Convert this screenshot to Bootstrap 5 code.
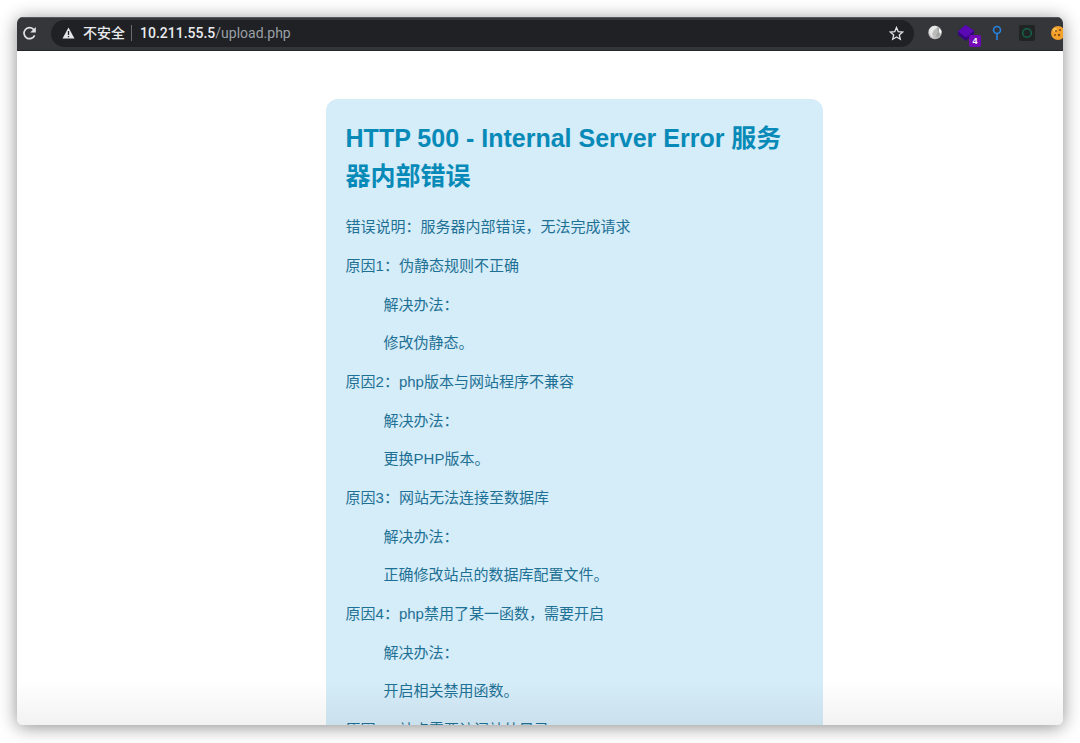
<!DOCTYPE html>
<html lang="zh-CN">
<head>
<meta charset="utf-8">
<meta name="viewport" content="width=device-width, initial-scale=1">
<title>HTTP 500</title>
<link href="https://cdn.jsdelivr.net/npm/bootstrap@5.3.0/dist/css/bootstrap.min.css" rel="stylesheet">
<script src="https://cdn.jsdelivr.net/npm/bootstrap@5.3.0/dist/js/bootstrap.bundle.min.js" defer></script>
<style>
body{background:#fff;font-family:"Liberation Sans","Noto Sans CJK SC",sans-serif;padding:17px 17px 18px}
.browser{border-radius:6px;box-shadow:0 2px 18px rgba(0,0,0,.45)}
.toolbar{height:34px;background:#35363a;border-top:1px solid #55565a;border-bottom:1px solid #242528;padding:0 0 2px 5px}
.toolbar button{background:none;border:0;padding:0;line-height:0;color:#dfe1e5}
.omnibox{background:#202124;height:27px;border-radius:14px;padding:0 10px 0 11px;margin:0 13px 0 14px;color:#e8eaed;font:14px/20px Roboto,"Noto Sans CJK SC",sans-serif}
.unsafe{font-size:14px;font-weight:500;margin-left:8px}
.divider{width:1px;height:16px;background:#6a6c70;margin:0 8px 0 6px}
.address{color:#9aa0a6;font-size:14px}
.address b{color:#e8eaed;font-weight:500}
.extensions{gap:14px;margin-right:-4px}
.count{position:absolute;right:-6px;bottom:-6px;width:12px;height:12px;border-radius:2px;background:#7209b7;color:#fff;font:bold 9px/12px "Liberation Sans",sans-serif;text-align:center}
.page{background:#fff}
.page::after{content:"";position:absolute;inset:auto 0 0;height:45px;background:linear-gradient(transparent,rgba(0,0,0,.05));pointer-events:none}
.notice{width:497px;max-width:100%;margin:48px 0 0 29.5%;padding:20px;border-radius:12px;background:#d5ecf9;color:#1e7194;font-size:15px;line-height:23px}
.notice h1{font-size:25px;line-height:38px;font-weight:700;color:#078ab7;margin:0 0 20px}
.notice p{margin:0 0 16px}
.notice blockquote{margin:0 0 16px 38px;font-size:15px}
.notice blockquote p{margin:0 0 15px}
.notice blockquote p:last-child{margin:0}
</style>
</head>
<body class="vh-100 overflow-hidden">
<div class="browser h-100 d-flex flex-column overflow-hidden">
  <header class="toolbar d-flex align-items-center flex-shrink-0">
    <button type="button" aria-label="重新加载"><svg width="15" height="15" viewBox="0 0 15 15"><path d="M12.6 9.3A5.5 5.5 0 1 1 11.5 3.4L13 5" fill="none" stroke="currentColor" stroke-width="1.7"/><path d="M13.8 1v5.6H8.2z" fill="currentColor"/></svg></button>
    <div class="omnibox d-flex align-items-center flex-grow-1">
      <svg width="13" height="12" viewBox="0 0 13 12"><path d="M6.5.5 12.5 11.5H.5z" fill="#e4e6e9"/><path d="M6.5 4v4M6.5 9v1.3" stroke="#202124" stroke-width="1.3"/></svg>
      <span class="unsafe">不安全</span><span class="divider"></span>
      <span class="address flex-grow-1"><b>10.211.55.5</b>/upload.php</span>
      <button type="button" aria-label="收藏"><svg width="15" height="15" viewBox="0 0 15 15"><path d="M7.5 1.5 9.2 5.6 13.700 6 10.3 8.9 11.3 13.2 7.5 10.9 3.7 13.2 4.7 8.9 1.3 6 5.8 5.6z" fill="none" stroke="currentColor" stroke-width="1.3"/></svg></button>
    </div>
    <div class="extensions d-flex align-items-center">
      <button type="button" aria-label="扩展程序"><svg width="16" height="16" viewBox="0 0 16 16"><circle cx="8" cy="7.5" r="6.8" fill="#bcbcbc"/><path d="M2 5Q4 .8 8 .7L11 2 7 5 5 9 7 13Q2 11 2 5" fill="#e8e8e8"/><path d="M10 2l3 2-1 3 1 3-3 3-1-3 2-3z" fill="#a5a5a5"/><path d="M12 3l2.5 3-.5 3-2-2z" fill="#f7f7f7"/></svg></button>
      <button type="button" class="position-relative" aria-label="扩展程序 4"><svg width="18" height="16" viewBox="0 0 18 16"><path d="M1 6.5 8.5 0 17 5.5V9L9 16 1 10z" fill="#35067c"/><path d="M1 6.5 8.5 0 17 5.5 9 12.5z" fill="#5a09b5"/></svg><span class="count">4</span></button>
      <button type="button" aria-label="扩展程序"><svg width="16" height="16" viewBox="0 0 16 16"><g fill="none" stroke="#2684e0" stroke-width="1.6"><circle cx="8" cy="5" r="3.5"/><path d="M8 8.5V15"/></g></svg></button>
      <button type="button" aria-label="扩展程序"><svg width="16" height="16" viewBox="0 0 16 16"><rect width="16" height="16" rx="2" fill="#202423"/><circle cx="8" cy="8" r="4.3" fill="none" stroke="#17604c" stroke-width="1.6"/></svg></button>
      <button type="button" aria-label="Cookie"><svg width="18" height="16" viewBox="0 0 18 16"><circle cx="9" cy="8" r="7" fill="#f4a12c"/><circle cx="6" cy="5" r="2" fill="#ffc55a"/><g fill="#8c4a12"><circle cx="7" cy="6" r="1"/><circle cx="11" cy="5" r="1.1"/><circle cx="6" cy="10" r="1"/><circle cx="10" cy="10" r="1.2"/></g></svg></button>
    </div>
  </header>
  <main class="page position-relative flex-grow-1 overflow-hidden">
    <div class="d-flex">
    <section class="notice">
      <h1>HTTP 500 - Internal Server Error 服务器内部错误</h1>
      <p>错误说明：服务器内部错误，无法完成请求</p>
      <p>原因1：伪静态规则不正确</p>
      <blockquote><p>解决办法：</p><p>修改伪静态。</p></blockquote>
      <p>原因2：php版本与网站程序不兼容</p>
      <blockquote><p>解决办法：</p><p>更换PHP版本。</p></blockquote>
      <p>原因3：网站无法连接至数据库</p>
      <blockquote><p>解决办法：</p><p>正确修改站点的数据库配置文件。</p></blockquote>
      <p>原因4：php禁用了某一函数，需要开启</p>
      <blockquote><p>解决办法：</p><p>开启相关禁用函数。</p></blockquote>
      <p>原因5：站点需要访问站外目录</p>
    </section>
    </div>
  </main>
</div>
</body>
</html>
